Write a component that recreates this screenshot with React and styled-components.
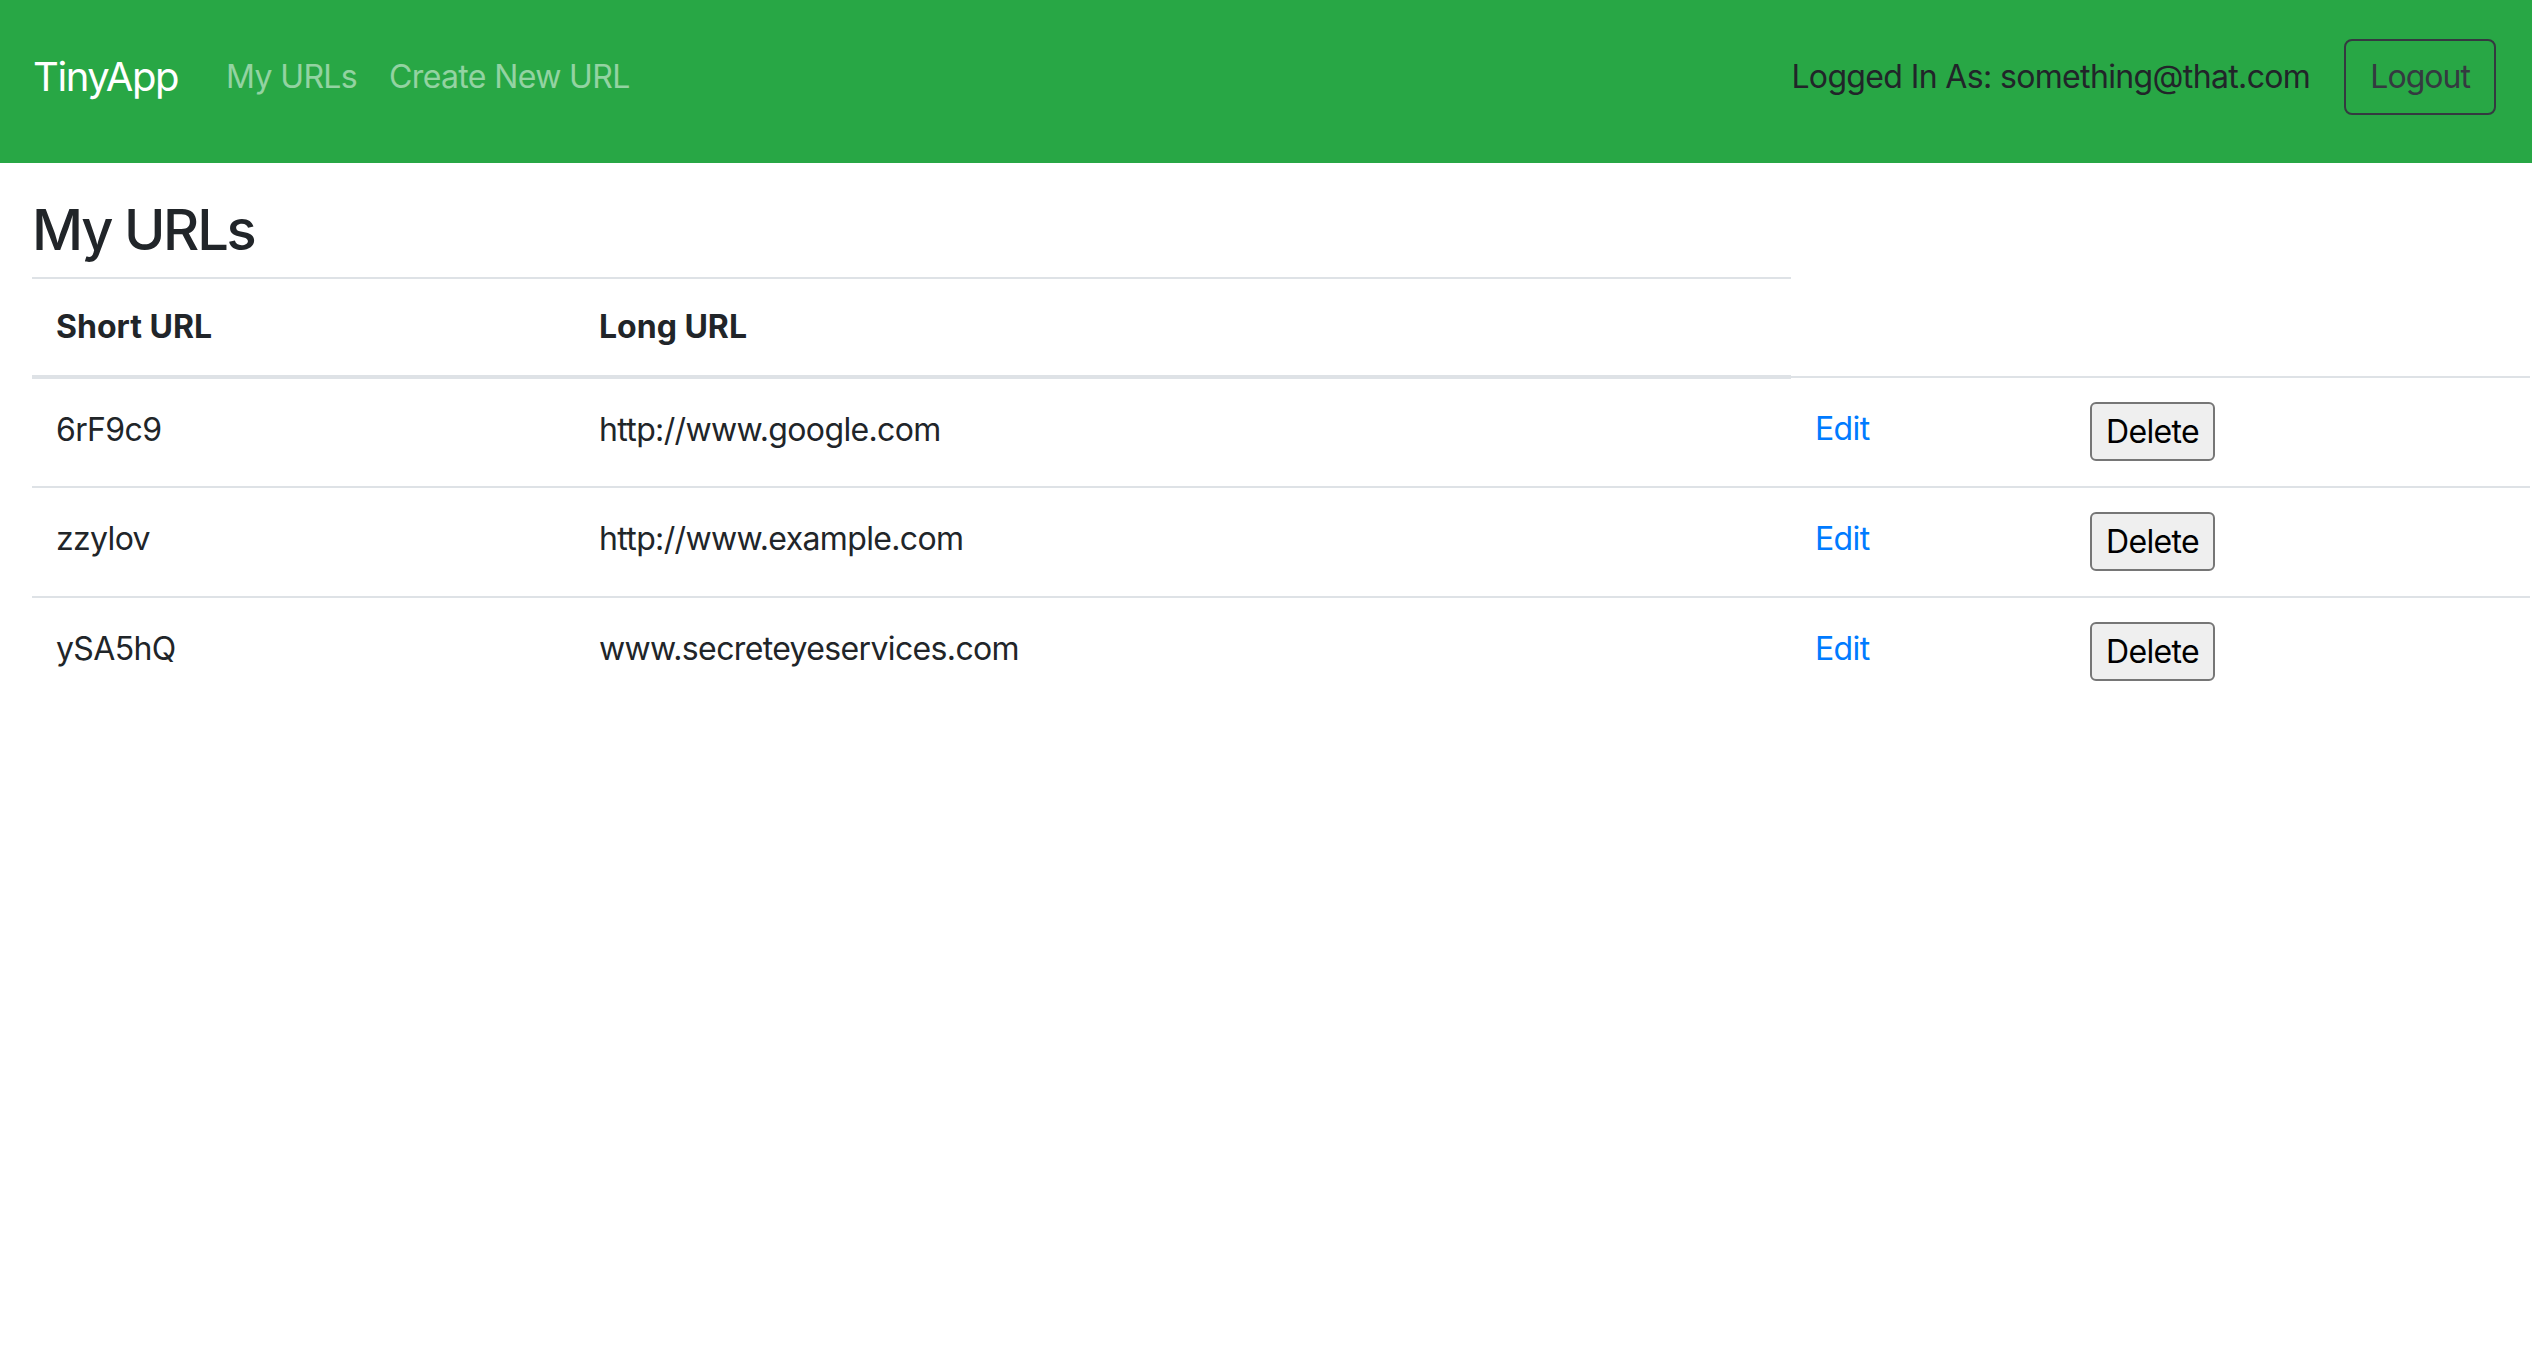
import React from "react";
import styled, { createGlobalStyle } from "styled-components";

const GlobalStyle = createGlobalStyle`
  body {
    margin: 0;
    font-family: Inter, "Liberation Sans", sans-serif;
    color: #212529;
    background: #fff;
    letter-spacing: -0.04em;
  }
`;

const Nav = styled.nav`
  display: flex;
  align-items: center;
  background-color: #28a745;
  padding: 39px 36px 48px 33px;
`;

const Brand = styled.a`
  font-size: 40px;
  line-height: 60px;
  letter-spacing: -0.035em;
  color: #fff;
  text-decoration: none;
  margin-right: 32px;
`;

const NavLinks = styled.div`
  display: flex;
`;

const NavLink = styled.a`
  font-size: 32px;
  line-height: 48px;
  padding: 0 16px;
  color: rgba(255, 255, 255, 0.5);
  text-decoration: none;
`;

const UserArea = styled.div`
  margin-left: auto;
  display: flex;
  align-items: center;
  gap: 34px;
`;

const UserText = styled.span`
  font-size: 32px;
  line-height: 48px;
  color: #212529;
`;

const OutlineButton = styled.button`
  font-family: inherit;
  font-size: 32px;
  line-height: 48px;
  letter-spacing: -0.03em;
  padding: 12px 24px;
  color: #343a40;
  background: transparent;
  border: 2px solid #343a40;
  border-radius: 8px;
`;

const Main = styled.main`
  padding: 34px 2px 0 32px;
`;

const Title = styled.h3`
  font-size: 56px;
  font-weight: 500;
  line-height: 67px;
  letter-spacing: -0.04em;
  margin: 0 0 13px;
`;

const Table = styled.table`
  width: 100%;
  border-collapse: collapse;
  table-layout: fixed;
  font-size: 32px;
  line-height: 48px;
`;

const Th = styled.th`
  text-align: left;
  font-weight: 700;
  letter-spacing: 0;
  padding: 24px;
  vertical-align: bottom;
  border-top: 2px solid #dee2e6;
  border-bottom: 4px solid #dee2e6;
`;

const Td = styled.td`
  padding: ${(p) => (p.$text ? "27px 24px 21px" : "24px")};
  vertical-align: top;
  border-top: 2px solid #dee2e6;
`;

const EditLink = styled.a`
  color: #007bff;
  text-decoration: none;
`;

const DeleteButton = styled.button`
  font-family: inherit;
  font-size: 32px;
  letter-spacing: -0.02em;
  height: 59px;
  margin-bottom: 1px;
  padding: 0 14px;
  vertical-align: top;
  color: #000;
  background: #efefef;
  border: 2px solid #767676;
  border-radius: 6px;
`;

const urls = [
  { id: "6rF9c9", long: "http://www.google.com" },
  { id: "zzylov", long: "http://www.example.com" },
  { id: "ySA5hQ", long: "www.secreteyeservices.com" },
];

export default function App() {
  return (
    <>
      <GlobalStyle />
      <Nav>
        <Brand href="#">TinyApp</Brand>
        <NavLinks>
          <NavLink href="#">My URLs</NavLink>
          <NavLink href="#">Create New URL</NavLink>
        </NavLinks>
        <UserArea>
          <UserText>Logged In As: something@that.com</UserText>
          <OutlineButton>Logout</OutlineButton>
        </UserArea>
      </Nav>
      <Main>
        <Title>My URLs</Title>
        <Table>
          <colgroup>
            <col style={{ width: 543 }} />
            <col style={{ width: 1216 }} />
            <col style={{ width: 275 }} />
            <col />
          </colgroup>
          <thead>
            <tr>
              <Th>Short URL</Th>
              <Th>Long URL</Th>
            </tr>
          </thead>
          <tbody>
            {urls.map((u) => (
              <tr key={u.id}>
                <Td $text>{u.id}</Td>
                <Td $text>{u.long}</Td>
                <Td $text>
                  <EditLink href="#">Edit</EditLink>
                </Td>
                <Td>
                  <DeleteButton>Delete</DeleteButton>
                </Td>
              </tr>
            ))}
          </tbody>
        </Table>
      </Main>
    </>
  );
}
